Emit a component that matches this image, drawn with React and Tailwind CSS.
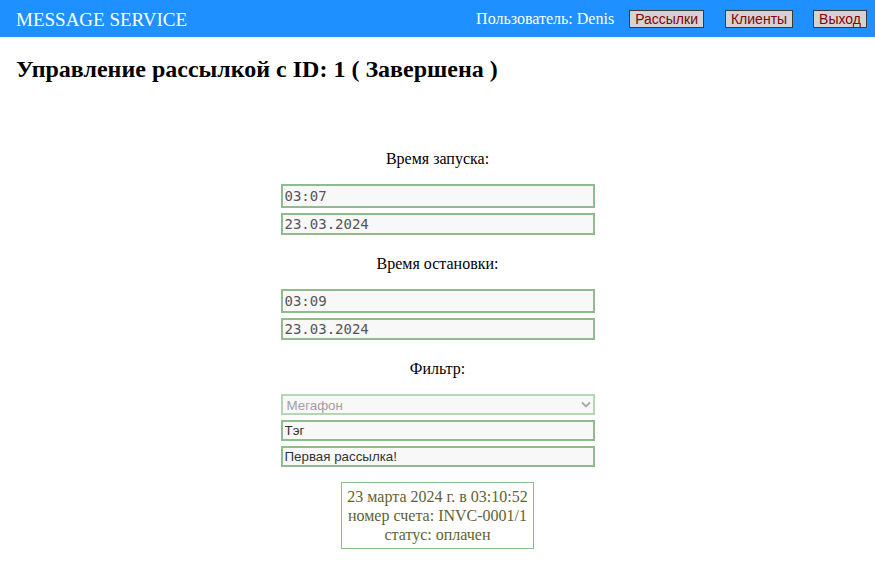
export default function App() {
  const serif = "font-['Liberation_Serif',serif]";
  const btn =
    "h-[18px] px-[5px] bg-[#d3d3d3] border border-[#3a3a3a] text-[#8b0000] text-[14px] leading-none font-['Liberation_Sans',sans-serif]";
  const field =
    "block w-[314px] border-2 border-[#8fbc8f] bg-[#f8f8f8] pl-[2px] pr-[3px] py-0 outline-none";
  const mono = "font-['DejaVu_Sans_Mono',monospace] text-[14px] text-[#555]";
  const sans = "font-['Liberation_Sans',sans-serif] text-[13.33px] text-[#333]";

  return (
    <div className={`min-h-screen bg-white ${serif} text-black`}>
      <header className="h-[37px] bg-[#1e90ff] flex items-center pl-4 pr-2 text-white">
        <div className="text-[19px] leading-none pt-[1px]">MESSAGE SERVICE</div>
        <div className="ml-auto flex items-center">
          <span className="text-[16px] mr-[15px]">Пользователь: Denis</span>
          <button className={`${btn} mr-[21px]`}>Рассылки</button>
          <button className={`${btn} mr-[20px]`}>Клиенты</button>
          <button className={btn}>Выход</button>
        </div>
      </header>

      <h1 className="px-4 mt-[18px] text-[24px] font-bold leading-[28px]">
        Управление рассылкой с ID: 1 ( Завершена )
      </h1>

      <div className="flex flex-col items-center mt-[67px]">
        <div className="text-[16px] leading-[18px]">Время запуска:</div>
        <input readOnly value="03:07" className={`${field} ${mono} h-[24px] mt-[16px]`} />
        <input readOnly value="23.03.2024" className={`${field} ${mono} h-[22px] mt-[5px]`} />

        <div className="text-[16px] leading-[18px] mt-[20px]">Время остановки:</div>
        <input readOnly value="03:09" className={`${field} ${mono} h-[24px] mt-[16px]`} />
        <input readOnly value="23.03.2024" className={`${field} ${mono} h-[22px] mt-[5px]`} />

        <div className="text-[16px] leading-[18px] mt-[20px]">Фильтр:</div>
        <div className="relative mt-[16px]">
          <select
            disabled
            className={`${field} h-[21px] appearance-none border-[#b5d6b5] bg-[#f0f0f0] font-['Liberation_Sans',sans-serif] text-[13.33px] text-[#a0a0a0] pl-[4px]`}
          >
            <option>Мегафон</option>
          </select>
          <svg
            className="absolute right-[4px] top-[7px]"
            width="10"
            height="8"
            viewBox="0 0 10 8"
            fill="none"
          >
            <path d="M1 1.5l4 4 4-4" stroke="#a8a8a8" strokeWidth="1.8" />
          </svg>
        </div>
        <input readOnly value="Тэг" className={`${field} ${sans} h-[21px] mt-[5px]`} />
        <input readOnly value="Первая рассылка!" className={`${field} ${sans} h-[21px] mt-[5px]`} />

        <div className="mt-[15px] w-[193px] border border-[#8fbc8f] py-[4px] text-center text-[16px] leading-[19px] text-[#626230]">
          <div>23 марта 2024 г. в 03:10:52</div>
          <div>номер счета: INVC-0001/1</div>
          <div>статус: оплачен</div>
        </div>
      </div>
    </div>
  );
}
